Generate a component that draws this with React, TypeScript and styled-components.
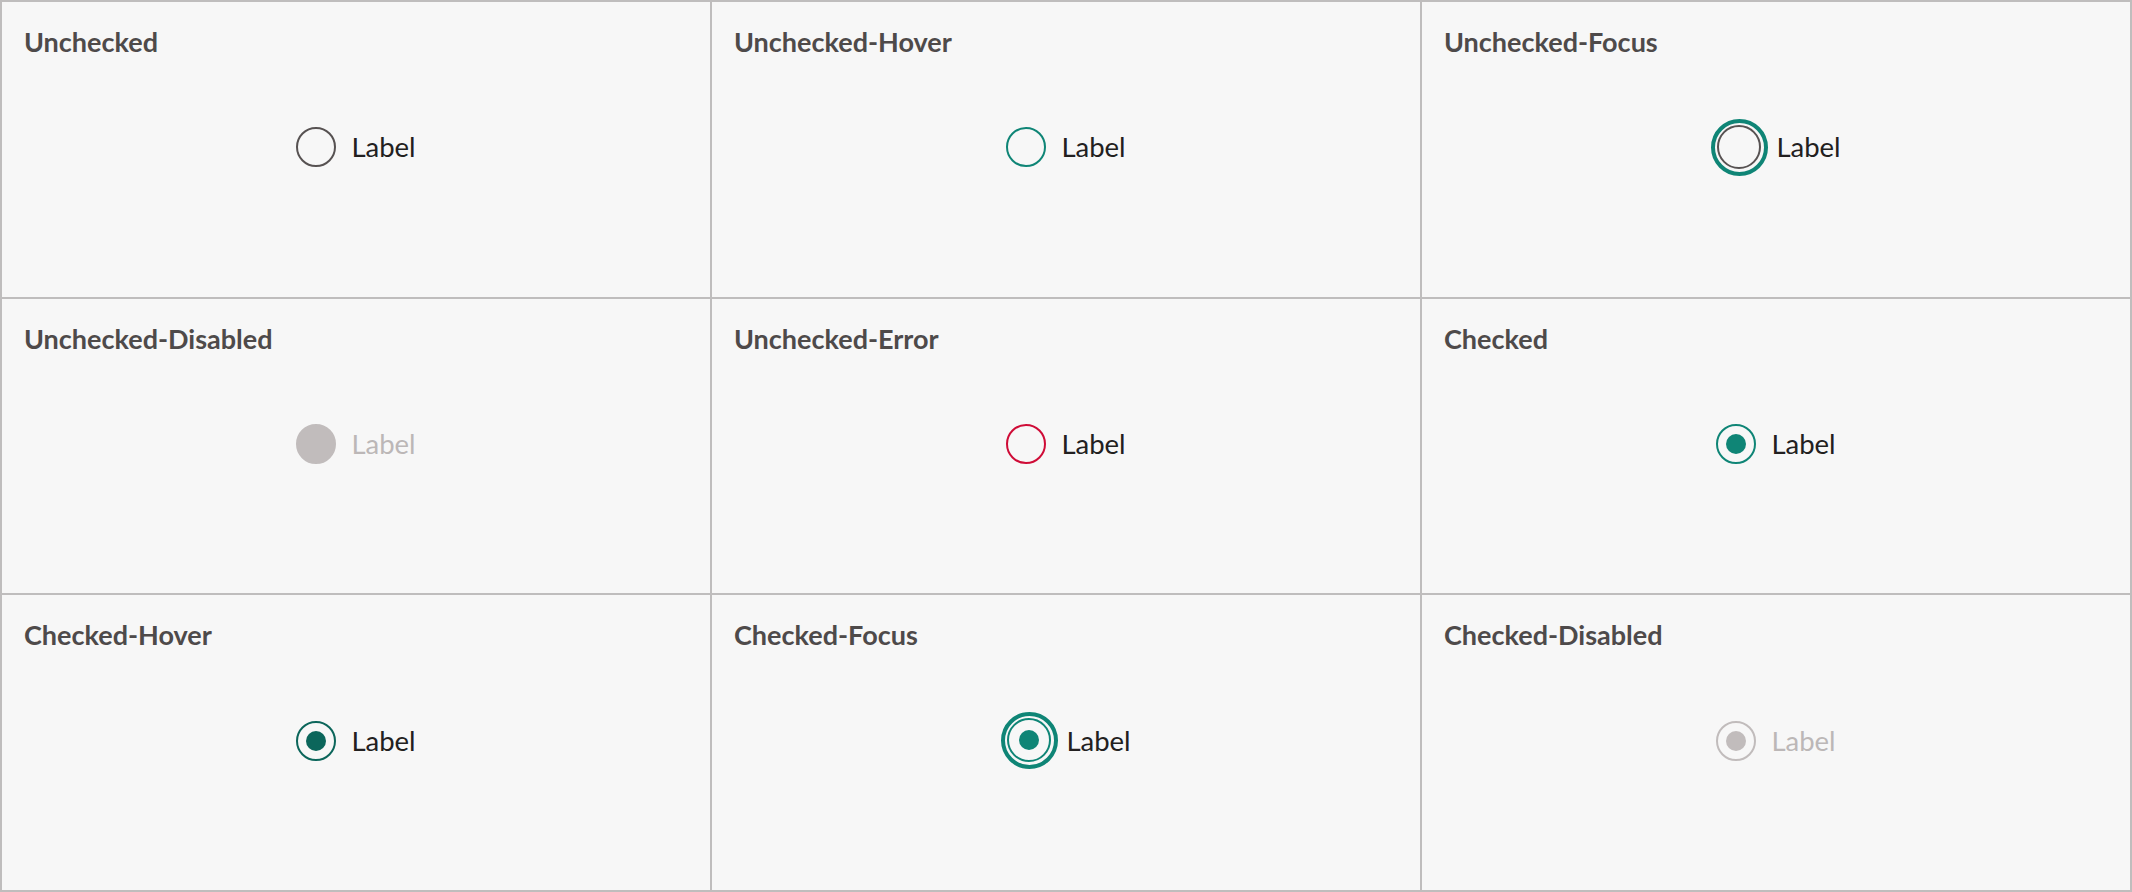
import styled, { createGlobalStyle, css } from "styled-components";

type Variant =
  | "unchecked"
  | "hover"
  | "focus"
  | "disabled"
  | "error"
  | "checked"
  | "checkedHover"
  | "checkedFocus"
  | "checkedDisabled";

const cells: { title: string; variant: Variant }[] = [
  { title: "Unchecked", variant: "unchecked" },
  { title: "Unchecked-Hover", variant: "hover" },
  { title: "Unchecked-Focus", variant: "focus" },
  { title: "Unchecked-Disabled", variant: "disabled" },
  { title: "Unchecked-Error", variant: "error" },
  { title: "Checked", variant: "checked" },
  { title: "Checked-Hover", variant: "checkedHover" },
  { title: "Checked-Focus", variant: "checkedFocus" },
  { title: "Checked-Disabled", variant: "checkedDisabled" },
];

const TEAL = "#0f8576";
const TEAL_DARK = "#0c665b";
const GRAY = "#575252";
const DISABLED = "#c1bcbc";
const ERROR = "#cf0c37";

const GlobalStyle = createGlobalStyle`
  body {
    margin: 0;
    background: #f7f7f7;
    font-family: Lato, "Open Sans", sans-serif;
  }
`;

const Board = styled.div`
  box-sizing: border-box;
  width: 2132px;
  height: 892px;
  padding: 2px;
  background: #bfbdbd;
  display: grid;
  grid-template-columns: repeat(3, 1fr);
  grid-template-rows: repeat(3, 1fr);
  gap: 2px;
`;

const Cell = styled.div`
  background: #f7f7f7;
  display: grid;
  grid-template: 1fr / 1fr;
  padding: 24px 22px;
  > * {
    grid-area: 1 / 1;
  }
`;

const Title = styled.div`
  align-self: start;
  justify-self: start;
  font-size: 27px;
  font-weight: 700;
  color: #4e4a4a;
  line-height: 31px;
`;

const Row = styled.div<{ $focus: boolean }>`
  align-self: center;
  justify-self: center;
  display: flex;
  align-items: center;
  gap: ${(p) => (p.$focus ? "8px" : "15px")};
  margin-top: -4px;
`;

const Ring = styled.div`
  box-sizing: border-box;
  width: 57px;
  height: 57px;
  border-radius: 50%;
  border: 4.5px solid ${TEAL};
  padding: 2px;
  display: flex;
`;

const Circle = styled.div<{ $color: string; $filled?: boolean; $size: number }>`
  box-sizing: border-box;
  width: ${(p) => p.$size}px;
  height: ${(p) => p.$size}px;
  border-radius: 50%;
  border: 2px solid ${(p) => p.$color};
  display: flex;
  align-items: center;
  justify-content: center;
  ${(p) =>
    p.$filled &&
    css`
      background: ${p.$color};
    `}
`;

const Dot = styled.div<{ $color: string }>`
  width: 20px;
  height: 20px;
  border-radius: 50%;
  background: ${(p) => p.$color};
`;

const Label = styled.span<{ $disabled: boolean }>`
  font-size: 27.5px;
  font-weight: 400;
  color: ${(p) => (p.$disabled ? "#bcb7b7" : "#222020")};
  line-height: 32px;
`;

const Radio = ({ variant }: { variant: Variant }) => {
  const colorMap: Record<Variant, string> = {
    unchecked: GRAY,
    hover: TEAL,
    focus: GRAY,
    disabled: DISABLED,
    error: ERROR,
    checked: TEAL,
    checkedHover: TEAL_DARK,
    checkedFocus: TEAL,
    checkedDisabled: DISABLED,
  };
  const color = colorMap[variant];
  const checked = variant.startsWith("checked");
  const focus = variant === "focus" || variant === "checkedFocus";

  const circle = (
    <Circle $color={color} $filled={variant === "disabled"} $size={focus ? 44 : 40}>
      {checked && <Dot $color={color} />}
    </Circle>
  );

  return (
    <Row $focus={focus}>
      {focus ? <Ring>{circle}</Ring> : circle}
      <Label $disabled={variant === "disabled" || variant === "checkedDisabled"}>Label</Label>
    </Row>
  );
};

const App = () => {
  return (
    <>
      <GlobalStyle />
      <Board>
        {cells.map((c) => (
          <Cell key={c.title}>
            <Title>{c.title}</Title>
            <Radio variant={c.variant} />
          </Cell>
        ))}
      </Board>
    </>
  );
};

export default App;
